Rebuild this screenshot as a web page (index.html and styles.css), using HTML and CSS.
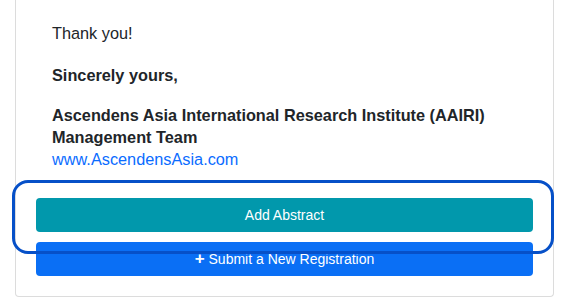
FILE: index.html
```html
<!DOCTYPE html>
<html lang="en">
<head>
    <meta charset="UTF-8">
    <meta name="viewport" content="width=device-width, initial-scale=1.0">
    <title>Registration Confirmation</title>
    <link rel="stylesheet" href="styles.css">
</head>
<body>
    <div class="card">
        <div class="card-body">
            <div class="message">
                <p class="cut-link"><a href="#">https://www.ascendensasia.com/pay</a></p>
                <p>Thank you!</p>
                <p class="bold">Sincerely yours,</p>
                <p class="bold signature">Ascendens Asia International Research Institute (AAIRI) Management Team<br>
                    <a href="#" class="normal">www.AscendensAsia.com</a></p>
            </div>

            <div class="actions">
                <button class="btn btn-teal">Add Abstract</button>
                <button class="btn btn-blue"><span class="plus">+</span> Submit a New Registration</button>
                <div class="highlight"></div>
            </div>
        </div>
    </div>
</body>
</html>
```

FILE: styles.css
```css
body {
    margin: 0;
    padding: 0 25px 0 15px;
    font-family: "Liberation Sans", Arial, sans-serif;
    color: #212529;
    background: #fff;
    overflow: hidden;
}
.card {
    border: 1px solid #dcdcdc;
    border-top: none;
    border-radius: 0 0 4px 4px;
    margin-top: -17px;
}
.card-body {
    padding: 0 20px 20px 20px;
}
.message {
    padding: 0 16px;
    font-size: 16.3px;
    line-height: 22px;
}
.message p {
    margin: 0 0 20px 0;
}
.cut-link {
    height: 19px;
    line-height: 14px;
}
a {
    color: #0a6cff;
    text-decoration: none;
}
.bold {
    font-weight: bold;
}
.normal {
    font-weight: normal;
}
.message p.bold {
    margin-bottom: 18px;
}
.message p.signature {
    margin-bottom: 0;
}
.actions {
    position: relative;
    display: flex;
    flex-direction: column;
    gap: 10px;
    margin-top: 28px;
}
.btn {
    display: block;
    width: 100%;
    height: 34px;
    border: none;
    border-radius: 4px;
    color: #fff;
    font-family: "Liberation Sans", Arial, sans-serif;
    font-size: 14px;
}
.btn-teal {
    background: #0198ac;
}
.btn-blue {
    background: #0a6ff5;
}
.plus {
    font-weight: bold;
    font-size: 17px;
}
.highlight {
    position: absolute;
    left: -24px;
    right: -21px;
    top: -18px;
    height: 68px;
    border: 3px solid #0650c8;
    border-radius: 16px;
}
```
